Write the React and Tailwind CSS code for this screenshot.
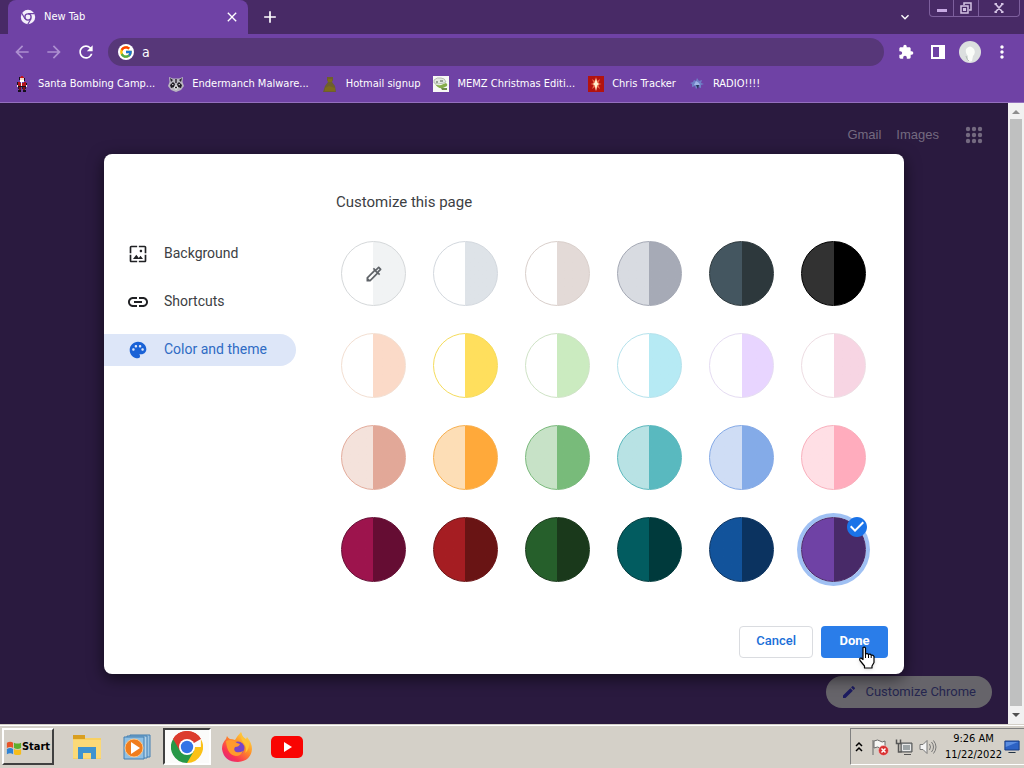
import { useState } from 'react'
import {
  MdAdd, MdArrowBack, MdArrowForward, MdCheckCircle, MdClose, MdEdit,
  MdExpandMore, MdExtension, MdLink, MdMoreVert, MdOutlineColorize, MdPalette,
  MdRefresh, MdWallpaper,
} from 'react-icons/md'
import { FcGoogle } from 'react-icons/fc'

const swatches = [
  { name: 'Custom color', color: 'border-[#d5d8da] from-[#ffffff] to-[#f1f3f4]' },
  { name: 'Default color', color: 'border-[#d3d8de] from-[#ffffff] to-[#dee3e8]' },
  { name: 'Warm grey', color: 'border-[#d9cfcb] from-[#ffffff] to-[#e3dad7]' },
  { name: 'Cool grey', color: 'border-[#a4a8b4] from-[#d8dbe1] to-[#a6aab6]' },
  { name: 'Midnight blue', color: 'border-[#2d383c] from-[#445660] to-[#2d383c]' },
  { name: 'Black', color: 'border-black from-[#323232] to-[#000000]' },
  { name: 'Beige', color: 'border-[#f3dfd2] from-[#ffffff] to-[#fbdac8]' },
  { name: 'Yellow', color: 'border-[#f5dc5c] from-[#ffffff] to-[#ffdf5d]' },
  { name: 'Light green', color: 'border-[#cfe3c6] from-[#ffffff] to-[#cbebc0]' },
  { name: 'Light teal', color: 'border-[#b5e2ec] from-[#ffffff] to-[#b6eaf4]' },
  { name: 'Light purple', color: 'border-[#e5dcf2] from-[#ffffff] to-[#e8d5ff]' },
  { name: 'Light pink', color: 'border-[#eedde3] from-[#ffffff] to-[#f7d5e3]' },
  { name: 'Rose', color: 'border-[#e3ab9b] from-[#f4e2db] to-[#e2a898]' },
  { name: 'Orange', color: 'border-[#f8b04f] from-[#fddeb6] to-[#ffa93a]' },
  { name: 'Green', color: 'border-[#79b97b] from-[#c7e2c7] to-[#78bb7a]' },
  { name: 'Teal', color: 'border-[#5bb8bd] from-[#b8e2e4] to-[#59b9bf]' },
  { name: 'Blue', color: 'border-[#84a9e6] from-[#cfddf5] to-[#84abe8]' },
  { name: 'Pink', color: 'border-[#f9afbc] from-[#ffdfe5] to-[#ffacbd]' },
  { name: 'Dark pink', color: 'border-[#650e34] from-[#9d144d] to-[#650d33]' },
  { name: 'Dark red', color: 'border-[#6c1416] from-[#a51d22] to-[#691414]' },
  { name: 'Dark green', color: 'border-[#1a3a1c] from-[#265f2b] to-[#1a391b]' },
  { name: 'Dark teal', color: 'border-[#003b3d] from-[#025c60] to-[#003a3c]' },
  { name: 'Dark blue', color: 'border-[#0b3360] from-[#12539b] to-[#0b3360]' },
  { name: 'Dark purple', color: 'border-[#482a68] from-[#6f42a5] to-[#482a68]' },
]

function ChromeMono() {
  return (
    <svg viewBox="0 0 16 16" className="size-4">
      <circle cx="8" cy="8" r="7.2" fill="#f4effa" />
      <circle cx="8" cy="8" r="3.8" fill="#6f42a5" />
      <circle cx="8" cy="8" r="2.4" fill="#f4effa" />
      <path d="M8 4.600h6.600M5 9.800 1.800 4.200M11 9.800 7.800 15.200" stroke="#6f42a5" strokeWidth="1.200" />
    </svg>
  )
}

function SantaIcon() {
  return (
    <svg viewBox="0 0 16 16" className="size-4" shapeRendering="crispEdges">
      <path d="M7 0h2v1h1v2H6V1h1z" fill="#c4161c" />
      <path d="M6 2h4v3H6z" fill="#f3d9c8" />
      <path d="M6 4h4v2H6z" fill="#fff" />
      <path d="M4 6h2v1h4V6h2v5H4z" fill="#b3141a" />
      <path d="M7 6h1v4H7z" fill="#f2eef0" />
      <path d="M4 10h8v1H4zM4 14h3v2H4zM9 14h3v2H9zM3 6h1v4H3zM5 1h1v3H5zM12 7h1v3h-1zM10 2h1v3h-1z" fill="#17101c" />
      <path d="M5 11h2v3H5zM9 11h2v3H9z" fill="#7d1118" />
      <path d="M4 11h1v2H4zM8 11h1v2H8zM11 11h1v2h-1z" fill="#2b1630" />
      <path d="M3 9h1v2H3zM12 9h1v2h-1z" fill="#eee" />
    </svg>
  )
}

function RaccoonIcon() {
  return (
    <svg viewBox="0 0 16 16" className="size-4">
      <path d="M1 1l4 1.500h6L15 1l-.5 5L16 10l-3 4-5 2-5-2-3-4 1.500-4z" fill="#b9b6c0" />
      <path d="M2 2l3 2-2 2zM14 2l-3 2 2 2z" fill="#28222e" />
      <path d="M2 9l3-3 2 2-1 3-3 1zM14 9l-3-3-2 2 1 3 3 1z" fill="#1e1a22" />
      <path d="M7.200 3h1.600v4H7.200z" fill="#39333e" />
      <path d="M6 11.500 8 9l2 2.500L8 14z" fill="#fff" />
      <circle cx="8" cy="11.600" r="1" fill="#111" />
      <circle cx="4.800" cy="8.600" r=".7" fill="#fff" />
      <circle cx="11.200" cy="8.600" r=".7" fill="#fff" />
    </svg>
  )
}

function HotmailIcon() {
  return (
    <svg viewBox="0 0 16 16" className="size-4">
      <path d="M5 1h6v3l-1 2 3 4 1 6H1l2-6 3-4-1-2z" fill="#6e5f2c" />
      <path d="M6 3h4v3H6zM3 12l4-2 6 2v3H3z" fill="#7d6b1c" />
    </svg>
  )
}

function MemzIcon() {
  return (
    <svg viewBox="0 0 16 16" className="size-4">
      <path d="M0 0h16v16H0z" fill="#f7f8f5" />
      <path d="M1 4q3-3 7-2 4 0 5 4l-2 1-6 1-4-1z" fill="#e3e8e0" stroke="#93a08f" strokeWidth=".6" />
      <path d="M2 8q3 2 6 1l5-2q2 1 1 3l-4 2q-5 1-8-4z" fill="#86ad4a" />
      <path d="M8 12h6v2H9z" fill="#6f8d4a" />
      <path d="M3 6h2M7 5h3" stroke="#4c5c4a" />
    </svg>
  )
}

function ChrisIcon() {
  return (
    <svg viewBox="0 0 16 16" className="size-4">
      <path d="M0 0h16v16H0z" fill="#b3130f" />
      <path d="M8 1l1 4 3-2-1.500 4 3 1-3 1 1.500 4-3-2-1 4-1-4-3 2 1.500-4-3-1 3-1L4 3l3 2z" fill="#e8694a" />
      <path d="M8 2l1.200 4.500L11 8l-1.800 1.500L8 15l-1.200-5.500L5 8l1.800-1.500z" fill="#fff0cf" />
    </svg>
  )
}

function RadioIcon() {
  return (
    <svg viewBox="0 0 16 16" className="size-4">
      <path d="M8 2l2 3 3-1-1 3 3 1-3 1v3l-3-1-2 2-1-3-3 1V8L1 7l3-1 1-2 2 1z" fill="#6f7fc6" />
      <path d="M7 5l3 2 1 2H5l1-2z" fill="#9fb4e6" />
      <path d="M7 9h3l-1 4z" fill="#28385a" />
    </svg>
  )
}

const bookmarks = [
  { label: 'Santa Bombing Camp...', Icon: SantaIcon },
  { label: 'Endermanch Malware...', Icon: RaccoonIcon },
  { label: 'Hotmail signup', Icon: HotmailIcon },
  { label: 'MEMZ Christmas Editi...', Icon: MemzIcon },
  { label: 'Chris Tracker', Icon: ChrisIcon },
  { label: 'RADIO!!!!', Icon: RadioIcon },
]

function TabStrip() {
  return (
    <div className="flex h-[34px] items-start bg-[#482a66] pl-2 pr-1 text-white">
      <div className="flex h-[34px] w-60 items-center rounded-t-lg bg-[#6f42a5] px-3">
        <ChromeMono />
        <span className="ml-2 flex-1">New Tab</span>
        <button aria-label="Close tab" className="-mr-1"><MdClose className="size-4" /></button>
      </div>
      <button aria-label="New tab" className="ml-3 flex h-[34px] items-center"><MdAdd className="size-5" /></button>
      <button aria-label="Search tabs" className="ml-auto mr-4 flex h-[34px] items-center">
        <MdExpandMore className="size-4" />
      </button>
      <div className="flex h-[17px] rounded-b border border-t-0 border-[#7d5f9d] text-[#d3c3e3]">
        <button aria-label="Minimize" className="flex w-6 items-center justify-center border-r border-[#7d5f9d]">
          <svg viewBox="0 0 12 12" className="size-3"><path d="M1 7h10v3H1z" fill="#c7a9e3" /></svg>
        </button>
        <button aria-label="Restore" className="flex w-[25px] items-center justify-center border-r border-[#7d5f9d]">
          <svg viewBox="0 0 12 12" className="size-3" fill="none" stroke="currentColor" strokeWidth="1.500">
            <path d="M4 3V1h7v7H9M1 4h7v7H1zM3.700 6.700h1.600v1.600H3.700z" />
          </svg>
        </button>
        <button aria-label="Close" className="flex w-10 items-center justify-center">
          <svg viewBox="0 0 12 12" className="size-3" fill="none" stroke="currentColor" strokeWidth="1.800">
            <path d="M2.500 2l7 8M9.500 2l-7 8M1.500 2h2.500M8 2h2.500M1.500 10h2.500M8 10h2.500" />
          </svg>
        </button>
      </div>
    </div>
  )
}

function Toolbar() {
  const [query, setQuery] = useState('a')
  const iconButton = 'flex size-8 shrink-0 items-center justify-center'
  return (
    <div className="flex h-9 items-center bg-[#6f42a5] px-1.5 text-white">
      <button aria-label="Back" className={`${iconButton} text-[#ad8fd0]`}><MdArrowBack className="size-5" /></button>
      <button aria-label="Forward" className={`${iconButton} text-[#ad8fd0]`}><MdArrowForward className="size-5" /></button>
      <button aria-label="Reload" className={iconButton}><MdRefresh className="size-5" /></button>
      <div className="mx-1.5 flex h-7 flex-1 items-center rounded-full bg-[#573779] px-2.5">
        <span className="flex size-4 items-center justify-center rounded-full bg-white">
          <FcGoogle className="size-3.5" />
        </span>
        <input
          aria-label="Address and search bar"
          className="ml-2 min-w-0 flex-1 bg-transparent text-sm outline-none"
          value={query}
          onChange={(e) => setQuery(e.target.value)}
        />
      </div>
      <button aria-label="Extensions" className={iconButton}><MdExtension className="size-4" /></button>
      <button aria-label="Side panel" className={iconButton}>
        <svg viewBox="0 0 16 16" className="size-4"><path d="M1 1h14v14H1zM3 3v10h6V3z" fill="white" fillRule="evenodd" /></svg>
      </button>
      <button aria-label="Profile" className={iconButton}>
        <svg viewBox="0 0 22 22" className="size-[22px]">
          <circle cx="11" cy="11" r="11" fill="#dcdfdf" />
          <path d="M7 8q4-5 8 0 2 4-1 7l-1 5q-3 1-4 0v-5q-3-3-2-7z" fill="#fafcf8" />
          <path d="M7 15q1 4 3 5" fill="none" stroke="#b4c0b4" />
        </svg>
      </button>
      <button aria-label="Menu" className={iconButton}><MdMoreVert className="size-5" /></button>
    </div>
  )
}

function Bookmarks() {
  return (
    <nav className="flex h-[33px] items-center gap-[13px] border-b border-[#9470be] bg-[#6f42a5] px-3.5 pb-1 text-white">
      {bookmarks.map(({ label, Icon }) => (
        <a key={label} href="#" className="flex items-center gap-2 whitespace-nowrap">
          <Icon />
          {label}
        </a>
      ))}
    </nav>
  )
}

function SideItem({ Icon, label, active }) {
  return (
    <button
      className={`flex h-8 w-full items-center gap-3.5 rounded-r-full pl-[22px] ${
        active ? 'bg-[#dde6f8] text-[#2f6bc4]' : 'text-[#3c4043]'
      }`}
    >
      <span className={`flex size-6 items-center justify-center ${active ? 'text-[#1a62d6]' : 'text-[#202124]'}`}>
        <Icon className={Icon === MdLink ? 'size-6' : 'size-5'} />
      </span>
      <span className="pb-0.5">{label}</span>
    </button>
  )
}

function HandCursor() {
  return (
    <svg viewBox="0 0 18 24" className="absolute left-[37px] top-5 h-6 w-[18px] drop-shadow">
      <path
        d="M5 1.500q1.500-1 2.500.5V8q2-1 3 .5 2-.8 2.700.8 2-.8 2.800 1.200v6l-2 3.500v2H6.500v-2L2 14.500q-1-2.500 1-2.500l2 1.500z"
        fill="white" stroke="black" strokeWidth="1.200" strokeLinejoin="round"
      />
      <path d="M7.500 8v4M10.500 8.500V12M13.200 9.500V12" stroke="black" />
    </svg>
  )
}

function CustomizeDialog() {
  const [selected, setSelected] = useState('Dark purple')
  return (
    <div
      role="dialog"
      aria-labelledby="dialog-title"
      className="flex min-h-[520px] w-[800px] max-w-full rounded-lg bg-white font-[Roboto,sans-serif] text-sm text-[#3c4043] shadow-[0_4px_16px_rgba(0,0,0,0.6)]"
    >
      <div className="flex w-48 flex-col gap-4 pt-[84px]">
        <SideItem Icon={MdWallpaper} label="Background" />
        <SideItem Icon={MdLink} label="Shortcuts" />
        <SideItem Icon={MdPalette} label="Color and theme" active />
      </div>
      <div className="flex flex-1 flex-col pb-4 pl-10 pr-4 pt-9">
        <h1 id="dialog-title" className="text-[15px] leading-6">Customize this page</h1>
        <div className="ml-[5px] mt-[27px] grid grid-cols-[repeat(6,65px)] gap-[27px]">
          {swatches.map(({ name, color }, i) => (
            <label key={name} className="relative size-[65px]">
              <input
                type="radio"
                name="theme"
                aria-label={name}
                checked={selected === name}
                onChange={() => setSelected(name)}
                className={`block size-[65px] appearance-none rounded-full border bg-linear-to-r from-50% to-50% bg-origin-border checked:ring-4 checked:ring-[#9fc0f3] ${color}`}
              />
              {i === 0 && <MdOutlineColorize className="absolute inset-[23px] size-5 text-[#5f6368]" />}
              {selected === name && (
                <MdCheckCircle className="absolute -right-[3px] -top-0.5 size-6 text-[#1a73e8] bg-radial from-white from-50% to-transparent to-50%" />
              )}
            </label>
          ))}
        </div>
        <div className="mt-auto flex justify-end gap-2 text-[13px] font-medium">
          <button className="h-8 rounded border border-[#dadce0] px-4 text-[#1a6fd8]">Cancel</button>
          <button className="relative h-8 w-[67px] rounded bg-[#2a7de9] font-bold text-white">
            Done
            <HandCursor />
          </button>
        </div>
      </div>
    </div>
  )
}

function AppsGrid() {
  return (
    <svg viewBox="0 0 18 18" className="size-[18px]" fill="currentColor">
      {[3, 9, 15].map((y) => [3, 9, 15].map((x) => <circle key={`${x}-${y}`} cx={x} cy={y} r="2.200" />))}
    </svg>
  )
}

function Page() {
  return (
    <div className="flex flex-1">
      <main className="relative flex flex-1 flex-col justify-between bg-[#2a1a3f] p-4 font-['Liberation_Sans',sans-serif]">
        <div className="flex h-8 items-center justify-end gap-[15px] pr-[9px] text-[13px] text-[#746a80]">
          <a href="#">Gmail</a>
          <a href="#">Images</a>
          <button aria-label="Google apps" className="ml-[11px]"><AppsGrid /></button>
        </div>
        <button className="flex h-8 items-center gap-2 self-end rounded-full bg-[#66646a] pl-[15px] pr-4 font-[Roboto,sans-serif] text-[13px] text-[#25264f]">
          <MdEdit className="size-4 text-[#1d1c60]" />
          Customize Chrome
        </button>
        <div className="absolute inset-0 flex items-center justify-center">
          <CustomizeDialog />
        </div>
      </main>
      <div className="flex w-4 flex-col items-center bg-[#f1f1f1]">
        <svg viewBox="0 0 16 16" className="size-4"><path d="M4 11h8L8 7z" fill="#8e8e8e" /></svg>
        <div className="w-3 flex-1 bg-[#bfc0c0]" />
        <svg viewBox="0 0 16 18" className="h-[18px] w-4"><path d="M4 7h8l-4 4z" fill="#505050" /></svg>
      </div>
    </div>
  )
}

function FolderIcon() {
  return (
    <svg viewBox="0 0 30 28" className="h-7 w-[30px]">
      <path d="M1 2h12v3h16v21H1z" fill="#f8d062" />
      <path d="M1 2h12v4H1z" fill="#d99e1f" />
      <path d="M1 7h28v18H1z" fill="#fbd977" />
      <path d="M6 14h18v12h-5v-6h-8v6H6z" fill="#3f93cf" />
    </svg>
  )
}

function MediaIcon() {
  return (
    <svg viewBox="0 0 30 28" className="h-7 w-[30px]">
      <path d="M8 2h20v22H8z" fill="#9cc4e2" stroke="#437fb2" />
      <path d="M5 3h20v22H5z" fill="#b5d4ea" stroke="#437fb2" />
      <path d="M2 4h20v22H2z" fill="#8fc0e4" stroke="#437fb2" />
      <circle cx="12" cy="15" r="9" fill="#f07d1d" stroke="#fbc78d" />
      <path d="M9 9v12l9-6z" fill="white" />
    </svg>
  )
}

function ChromeIcon() {
  return (
    <svg viewBox="0 0 48 48" className="size-8">
      <path d="M24 24 3.200 12A24 24 0 0 1 44.800 12z" fill="#dc3b2d" />
      <path d="M24 24h20.800V12A24 24 0 0 1 24 48l-1-12z" fill="#fbc116" />
      <path d="M24 24 3.200 12A24 24 0 0 0 24 48l10.400-18z" fill="#279847" />
      <path d="M24 12h20.800A24 24 0 0 0 3.200 12l10.400 18z" fill="#dc3b2d" />
      <circle cx="24" cy="24" r="12" fill="white" />
      <circle cx="24" cy="24" r="9.300" fill="#3474e6" />
    </svg>
  )
}

function FirefoxIcon() {
  return (
    <svg viewBox="0 0 32 32" className="size-8">
      <defs>
        <linearGradient id="flame" x1="1" y1="0" x2="0.200" y2="1">
          <stop offset="0.1" stopColor="#ffe14a" />
          <stop offset="0.450" stopColor="#ff9226" />
          <stop offset="0.8" stopColor="#fa3452" />
          <stop offset="1" stopColor="#e02680" />
        </linearGradient>
      </defs>
      <path d="M20 1q1 5 5 7l1-2q5 6 5 12-1 12-14 13Q3 31 1 18q0-6 4-10l1-3q1 2 3 3 3 0 5 1 3-5 6-8z" fill="url(#flame)" />
      <circle cx="17" cy="17" r="6.500" fill="#7846c8" />
      <path d="M5 10q6-3 11 2l3 1q-1 3-5 3-2 3 1 5 4 1 7-1-2 5-7 5Q6 24 5 10z" fill="#ff9a2c" />
      <path d="M20 1q-1 8 4 13 2 4 0 8 5-4 4-11-1 1-2-1-5-3-6-9z" fill="#ffc334" />
    </svg>
  )
}

function YoutubeIcon() {
  return (
    <svg viewBox="0 0 32 22" className="h-[22px] w-8">
      <rect width="32" height="22" rx="5" fill="#f90402" />
      <path d="M13 6v10l8-5z" fill="white" />
    </svg>
  )
}

function Taskbar() {
  return (
    <footer className="flex h-11 items-start border-t border-[#d4d0c8] bg-[#d4d0c8] pl-0.5 pt-[3px] text-black shadow-[inset_0_1px_0_white]">
      <button className="flex h-[37px] w-[52px] items-center justify-center border-2 border-b-[#404040] border-l-white border-r-[#404040] border-t-white pt-0.5 font-bold">
        <svg viewBox="0 0 18 18" className="size-4 shrink-0">
          <path d="M1 3q4-2 7 0v6q-3-2-7 0z" fill="#e85428" />
          <path d="M9 3q4 2 8 0v6q-4 2-8 0z" fill="#5eaf2e" />
          <path d="M1 10q4-2 7 0v6q-3-2-7 0z" fill="#2f83d4" />
          <path d="M9 10q4 2 8 0v6q-4 2-8 0z" fill="#f6bd1b" />
        </svg>
        Start
      </button>
      <div className="ml-[18px] flex items-center">
        <button aria-label="File Explorer"><FolderIcon /></button>
        <button aria-label="Media Player" className="ml-5"><MediaIcon /></button>
        <button aria-label="Chrome" className="ml-[11px] flex h-[37px] w-12 items-center justify-center border-2 border-b-white border-l-[#404040] border-r-white border-t-[#404040] bg-[#fbfbfa]">
          <ChromeIcon />
        </button>
        <button aria-label="Firefox" className="ml-2.5"><FirefoxIcon /></button>
        <button aria-label="YouTube" className="ml-[18px]"><YoutubeIcon /></button>
      </div>
      <div className="ml-auto flex h-[37px] items-center gap-1.5 border border-b-white border-r-0 border-l-[#808080] border-t-[#808080] px-1">
        <svg viewBox="0 0 8 12" className="mr-0.5 h-3 w-2" fill="none" stroke="black" strokeWidth="1.500">
          <path d="M1 5l3-3 3 3M1 10l3-3 3 3" />
        </svg>
        <svg viewBox="0 0 18 18" className="size-[18px]">
          <path d="M2 2v15M3 3q4-2 6 0t5 0v8q-3 1-5-1t-6 0z" fill="#f7f7f5" stroke="#6b6b6b" />
          <circle cx="12.500" cy="12.500" r="5" fill="#d93232" stroke="#f3cfcf" strokeWidth=".6" />
          <path d="M10.500 10.500l4 4M14.500 10.500l-4 4" stroke="white" strokeWidth="1.500" />
        </svg>
        <svg viewBox="0 0 18 18" className="size-[18px]" fill="none" stroke="#555">
          <path d="M6 5h11v9H6z" fill="#9da4a6" />
          <path d="M7.500 6.500h8v6h-8z" stroke="#e9e9e9" />
          <path d="M9 16.500h7" />
          <path d="M1.500 1.500v4h4v-4M3.500 5v9h3" strokeWidth="1.500" />
        </svg>
        <svg viewBox="0 0 18 18" className="size-[18px]" fill="none" stroke="#777">
          <path d="M1 6.500h3l4-4v13l-4-4H1z" fill="#f4f4f4" />
          <path d="M10.500 6q2 3 0 6M12.500 4q4 5 0 10M14.500 2.500q5 6.500 0 13" />
        </svg>
        <div className="ml-0.5 text-center leading-4">
          <div>9:26 AM</div>
          <div>11/22/2022</div>
        </div>
        <svg viewBox="0 0 18 14" className="-ml-1 h-3.5 w-4" preserveAspectRatio="none">
          <path d="M1 1h16v9H1z" fill="#2d62c4" stroke="#183a80" />
          <path d="M2 2h14l-14 5z" fill="#5b8de0" />
          <path d="M5 12h8v1H5z" fill="#234" />
        </svg>
      </div>
    </footer>
  )
}

function App() {
  return (
    <div className="flex min-h-screen flex-col font-['DejaVu_Sans_Condensed','Noto_Sans',sans-serif] text-[11px]">
      <TabStrip />
      <Toolbar />
      <Bookmarks />
      <Page />
      <Taskbar />
    </div>
  )
}

export default App
